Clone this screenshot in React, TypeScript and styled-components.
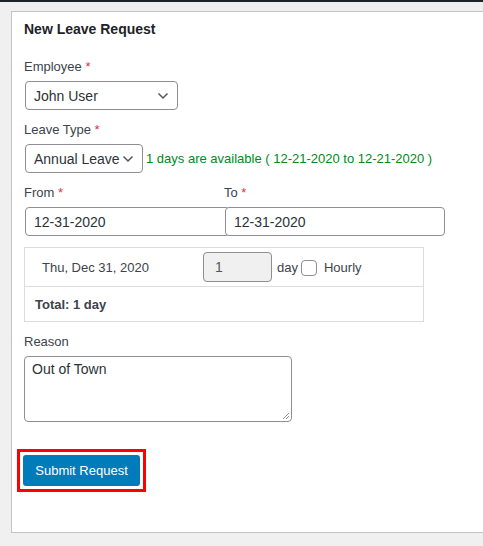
import styled, { createGlobalStyle } from "styled-components";

const GlobalStyle = createGlobalStyle`
  html, body {
    margin: 0;
    padding: 0;
    background: #f0f0f1;
  }
  body {
    font-family: "Liberation Sans", Arial, sans-serif;
    font-size: 13px;
    color: #3c434a;
  }
`;

const TopBar = styled.div`
  height: 2px;
  background: #1d2327;
`;

const Page = styled.div`
  padding: 9px 0 13px 11px;
`;

const Card = styled.div`
  background: #fff;
  border: 1px solid #c3c4c7;
  border-right: none;
  padding: 7px 12px 38px 12px;
  box-sizing: border-box;
  height: 522px;
`;

const Title = styled.h2`
  margin: 0 0 19px;
  font-size: 14px;
  font-weight: 700;
  color: #1d2327;
  line-height: 20px;
`;

const Field = styled.div`
  margin-bottom: 11px;
`;

const Label = styled.label`
  display: block;
  line-height: 18px;
  margin-bottom: 5px;
`;

const Req = styled.span`
  color: #d63638;
`;

const Inline = styled.div`
  display: flex;
  align-items: center;
  gap: 3px;
`;

const SelectBox = styled.div<{ $w: number }>`
  width: ${(p) => p.$w}px;
  height: 29px;
  box-sizing: border-box;
  margin-left: 1px;
  border: 1px solid #8c8f94;
  border-radius: 4px;
  display: flex;
  align-items: center;
  justify-content: space-between;
  padding: 0 8px 0 8px;
  font-size: 14px;
  color: #2c3338;
  background: #fff;
`;

const Avail = styled.span`
  color: #008a20;
  font-size: 13px;
`;

const DateGrid = styled.div`
  display: grid;
  grid-template-columns: 200px 221px;
`;

const TextInput = styled.div<{ $over?: boolean }>`
  height: 29px;
  box-sizing: border-box;
  border: 1px solid #8c8f94;
  border-radius: 4px;
  display: flex;
  align-items: center;
  padding: 0 8px;
  font-size: 14px;
  color: #2c3338;
  background: #fff;
  margin-left: 1px;
  margin-right: ${(p) => (p.$over ? "0" : "-6px")};
  position: relative;
  z-index: ${(p) => (p.$over ? 1 : 0)};
`;

const DaysTable = styled.div`
  width: 400px;
  box-sizing: border-box;
  border: 1px solid #dcdcde;
  margin-bottom: 11px;
`;

const DayRow = styled.div`
  display: flex;
  align-items: center;
  height: 38px;
  padding: 0 0 0 17px;
  border-bottom: 1px solid #dcdcde;
`;

const DayDate = styled.span`
  width: 161px;
`;

const DayInput = styled.div`
  width: 69px;
  height: 30px;
  box-sizing: border-box;
  border: 1px solid #8c8f94;
  border-radius: 4px;
  background: #f0f0f1;
  display: flex;
  align-items: center;
  padding: 0 11px;
  font-size: 14px;
  color: #50575e;
`;

const DayUnit = styled.span`
  margin-left: 5px;
`;

const Check = styled.span`
  width: 16px;
  height: 16px;
  box-sizing: border-box;
  border: 1px solid #8c8f94;
  border-radius: 4px;
  margin: 2px 7px 0 3px;
  background: #fff;
`;

const TotalRow = styled.div`
  height: 34px;
  display: flex;
  align-items: center;
  padding-left: 10px;
  font-weight: 700;
`;

const TextArea = styled.div`
  width: 268px;
  height: 66px;
  box-sizing: border-box;
  border: 1px solid #8c8f94;
  border-radius: 4px;
  padding: 4px 7px;
  font-size: 14px;
  color: #2c3338;
  position: relative;
`;

const Grip = styled.svg`
  position: absolute;
  right: 1px;
  bottom: 1px;
`;

const Highlight = styled.div`
  display: inline-block;
  margin: 27px 0 0 -7px;
  border: 3px solid #ff0000;
  padding: 3px;
`;

const Button = styled.button`
  display: block;
  width: 117px;
  height: 31px;
  border: none;
  border-radius: 3px;
  background: #007cba;
  color: #fff;
  font-family: inherit;
  font-size: 13px;
  padding: 0;
`;

function Chevron() {
  return (
    <svg width="12" height="8" viewBox="0 0 12 8">
      <path d="M1.5 1.5 6 6l4.5-4.5" fill="none" stroke="#50575e" strokeWidth="1.5" />
    </svg>
  );
}

export default function App() {
  return (
    <>
      <GlobalStyle />
      <TopBar />
      <Page>
        <Card>
          <Title>New Leave Request</Title>
          <Field>
            <Label>
              Employee <Req>*</Req>
            </Label>
            <SelectBox $w={153}>
              John User
              <Chevron />
            </SelectBox>
          </Field>
          <Field>
            <Label>
              Leave Type <Req>*</Req>
            </Label>
            <Inline>
              <SelectBox $w={118}>
                Annual Leave
                <Chevron />
              </SelectBox>
              <Avail>1 days are available ( 12-21-2020 to 12-21-2020 )</Avail>
            </Inline>
          </Field>
          <Field>
            <DateGrid>
              <Label>
                From <Req>*</Req>
              </Label>
              <Label>
                To <Req>*</Req>
              </Label>
              <TextInput>12-31-2020</TextInput>
              <TextInput $over>12-31-2020</TextInput>
            </DateGrid>
          </Field>
          <DaysTable>
            <DayRow>
              <DayDate>Thu, Dec 31, 2020</DayDate>
              <DayInput>1</DayInput>
              <DayUnit>day</DayUnit>
              <Check />
              <span>Hourly</span>
            </DayRow>
            <TotalRow>Total: 1 day</TotalRow>
          </DaysTable>
          <Label>Reason</Label>
          <TextArea>
            Out of Town
            <Grip width="8" height="8" viewBox="0 0 8 8">
              <path d="M7 1 1 7M7 4 4 7" stroke="#8c8f94" strokeWidth="1" />
            </Grip>
          </TextArea>
          <Highlight>
            <Button>Submit Request</Button>
          </Highlight>
        </Card>
      </Page>
    </>
  );
}
